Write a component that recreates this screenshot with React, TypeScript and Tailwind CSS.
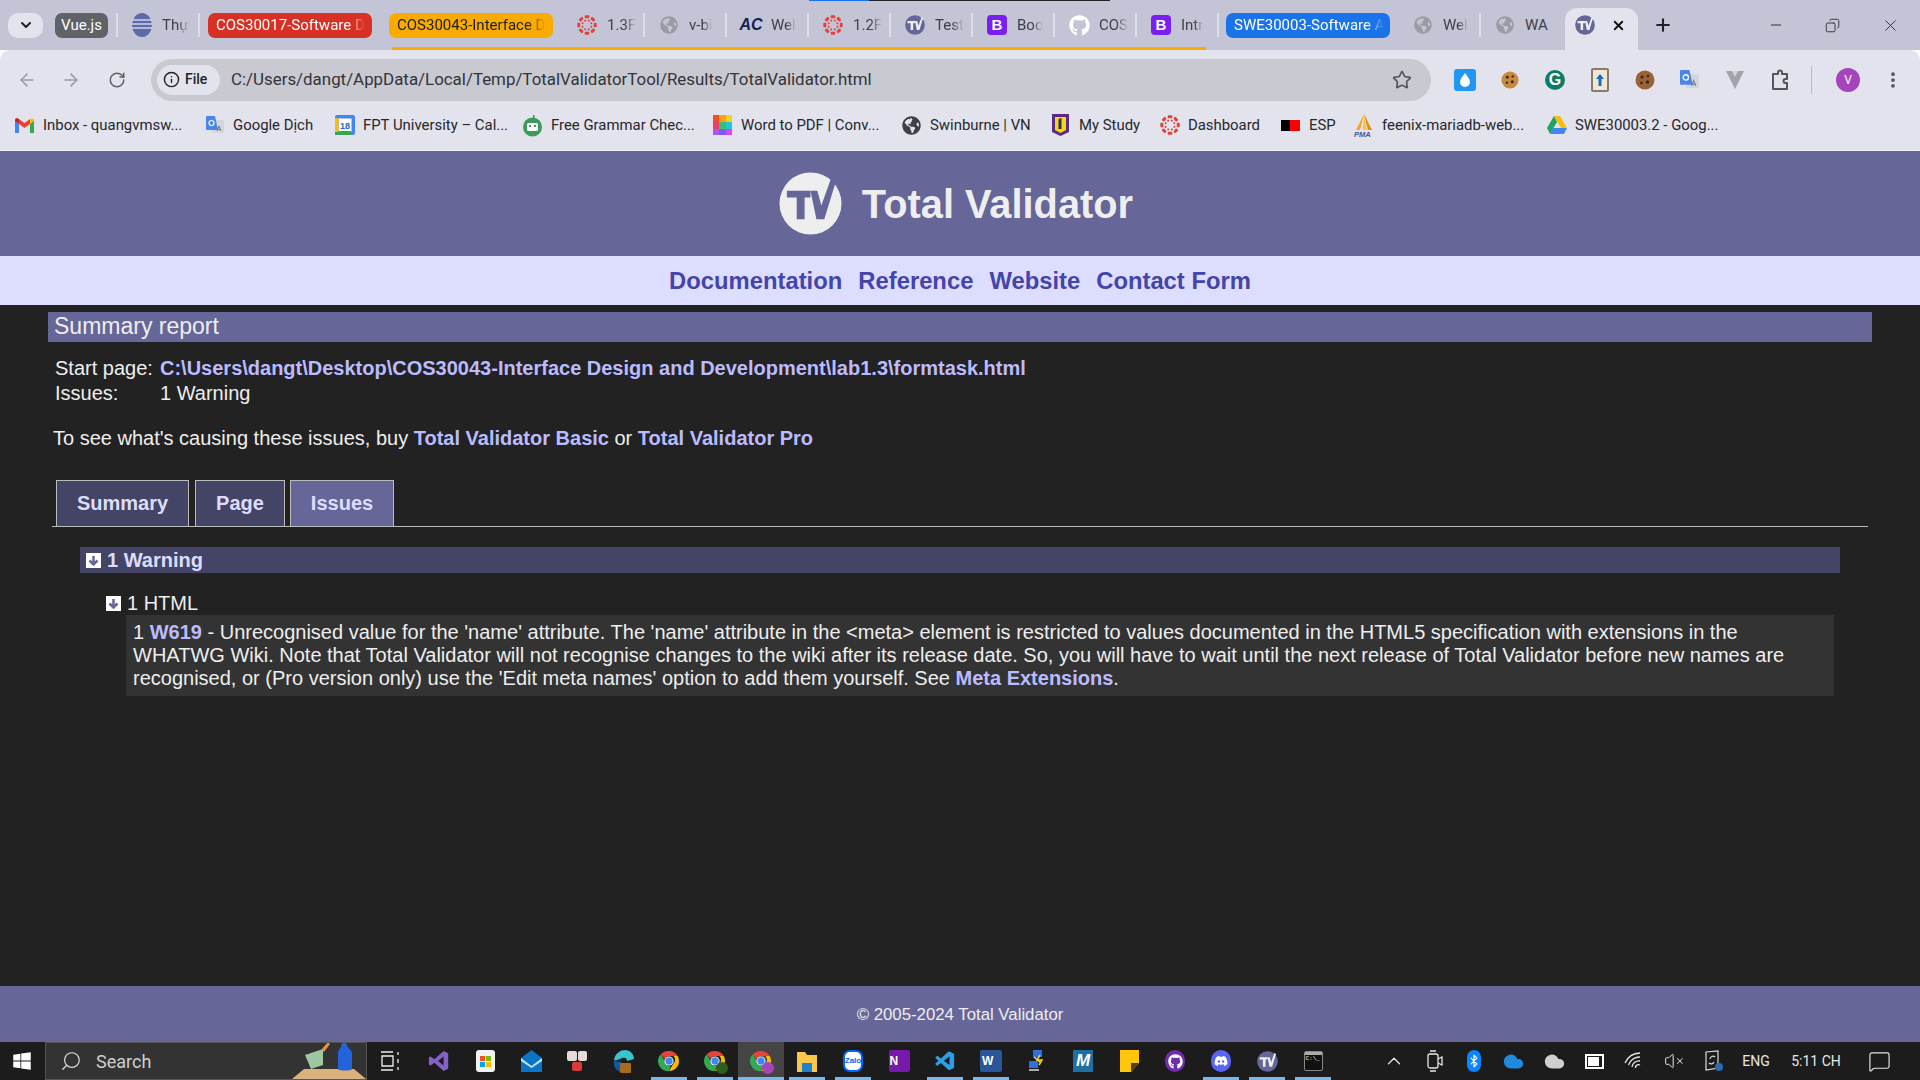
import type { ReactNode } from "react";
import {
  ArrowLeft,
  ArrowRight,
  ChevronDown,
  ChevronUp,
  Info,
  MoreVertical,
  Plus,
  RotateCw,
  Search,
  Star,
  Minus,
  X,
  Bluetooth,
  VolumeX,
  MessageSquare,
  Cloud,
  Copy,
} from "lucide-react";
import { FaDiscord, FaGithub, FaGlobeAmericas, FaWindows } from "react-icons/fa";
import { VscVscode } from "react-icons/vsc";

const UI_FONT = "font-['Roboto',sans-serif]";

function TvLogo({ size, bg = "#eeeeee", fg = "#666699" }: { size: number; bg?: string; fg?: string }) {
  return (
    <svg width={size} height={size} viewBox="0 0 64 64" className="shrink-0">
      <circle cx="32" cy="32" r="31.5" fill={bg} />
      <path d="M8 19h24v7h-6v22h-8V26H8z" fill={fg} />
      <path d="M32 19h7l4 15 10-28 5 3-12 39h-8z" fill={fg} />
    </svg>
  );
}

function CanvasIcon() {
  const dots = [0, 45, 90, 135, 180, 225, 270, 315];
  return (
    <svg width="20" height="20" viewBox="0 0 20 20" className="shrink-0">
      {dots.map((d) => (
        <g key={d} transform={`rotate(${d} 10 10)`}>
          <rect x="7.700" y="0.300" width="4.600" height="3" rx="1" fill="#e4413b" />
          <circle cx="10" cy="5.300" r="1" fill="#e4413b" transform="rotate(22.500 10 10)" />
        </g>
      ))}
    </svg>
  );
}

function BootstrapIcon() {
  return (
    <span className="flex h-[20px] w-[20px] shrink-0 items-center justify-center rounded-[4px] bg-[#7a1ff0] font-['Liberation_Sans',sans-serif] text-[15px] font-bold text-white">
      B
    </span>
  );
}

function ChromeIcon({ size = 22, badge }: { size?: number; badge?: string }) {
  return (
    <span className="relative shrink-0" style={{ width: size, height: size }}>
      <svg width={size} height={size} viewBox="0 0 24 24">
        <path d="M12 1a11 11 0 0 1 9.500 5.500H12a5.500 5.500 0 0 0-5 3L3 4.600A11 11 0 0 1 12 1z" fill="#ea4335" />
        <path d="M21.500 6.500A11 11 0 0 1 12 23l4.800-8.200a5.500 5.500 0 0 0 0-8.300z" fill="#fbbc05" />
        <path d="M12 23A11 11 0 0 1 3 4.600l4.800 8.300a5.500 5.500 0 0 0 6 4.500z" fill="#34a853" />
        <circle cx="12" cy="12" r="5" fill="#fff" />
        <circle cx="12" cy="12" r="4" fill="#4285f4" />
      </svg>
      {badge && (
        <span
          className="absolute right-[-2px] bottom-[-2px] h-[12px] w-[12px] rounded-full"
          style={{ backgroundColor: badge }}
        />
      )}
    </span>
  );
}

function DriveIcon() {
  return (
    <svg width="20" height="18" viewBox="0 0 20 18" className="shrink-0">
      <path d="M7 0h6l7 12h-6z" fill="#fbbc04" />
      <path d="M7 0l3 6-7 12-3-6z" fill="#1fa463" />
      <path d="M6 12h14l-3 6H3z" fill="#4285f4" />
    </svg>
  );
}

function GmailIcon() {
  return (
    <svg width="19" height="15" viewBox="0 0 19 15" className="shrink-0">
      <path d="M0 2v13h4V6z" fill="#4285f4" />
      <path d="M15 6v9h4V2z" fill="#34a853" />
      <path d="M15 2v4l4-3V2a2 2 0 0 0-3-1z" fill="#fbbc04" />
      <path d="M4 6V1l5.500 4L15 1v5l-5.500 4z" fill="#ea4335" />
      <path d="M0 2v1l4 3V1L3 .4A2 2 0 0 0 0 2z" fill="#c5221f" />
    </svg>
  );
}

function TranslateIcon({ size = 18 }: { size?: number }) {
  return (
    <svg width={size} height={size} viewBox="0 0 18 18" className="shrink-0">
      <rect x="6" y="4" width="12" height="13" rx="1" fill="#d5d6dc" />
      <path d="M11 15l2-5 2 5m-3-1.500h2" stroke="#777" fill="none" />
      <path d="M1 0h8l3 14H1a1 1 0 0 1-1-1V1a1 1 0 0 1 1-1z" fill="#4a86e8" />
      <circle cx="5.500" cy="7" r="2.500" fill="none" stroke="#fff" strokeWidth="1.200" />
    </svg>
  );
}

function CalendarIcon() {
  return (
    <svg width="20" height="20" viewBox="0 0 20 20" className="shrink-0">
      <rect width="20" height="20" rx="2" fill="#4285f4" />
      <rect x="3.500" y="3.500" width="13" height="13" fill="#fff" />
      <rect x="0" y="16" width="16" height="4" fill="#34a853" />
      <rect x="0" y="3" width="3.500" height="14" fill="#fbbc04" />
      <text x="10" y="14" fontSize="9" textAnchor="middle" fill="#1967d2" fontFamily="Liberation Sans" fontWeight="700">
        18
      </text>
    </svg>
  );
}

function GrammarIcon() {
  return (
    <svg width="19" height="24" viewBox="0 0 19 24" className="shrink-0">
      <circle cx="9.500" cy="13" r="9.500" fill="#3d9a5b" />
      <rect x="4" y="9" width="11" height="8" rx="1.500" fill="#fff" />
      <rect x="6" y="11" width="2" height="2" fill="#3d9a5b" />
      <rect x="11" y="11" width="2" height="2" fill="#3d9a5b" />
      <rect x="10" y="1" width="1.500" height="6" fill="#3d9a5b" />
    </svg>
  );
}

function PdfGridIcon() {
  const colors = ["#f04e23", "#f9a11b", "#f7d11e", "#ef3b70", "#38c172", "#21c7d9", "#a855f7", "#7a5cf0", "#d946ef"];
  return (
    <span className="grid h-[20px] w-[20px] shrink-0 grid-cols-3 grid-rows-3">
      {colors.map((c) => (
        <span key={c} style={{ backgroundColor: c }} />
      ))}
    </span>
  );
}

function MyStudyIcon() {
  return (
    <svg width="17" height="22" viewBox="0 0 17 22" className="shrink-0">
      <path d="M0 0h17v18l-8.500 4L0 18z" fill="#5b2a86" />
      <path d="M3 3h11v13l-5.500 3L3 16z" fill="#f5d90a" />
      <path d="M6.500 5l3-1v11h-3z" fill="#2f2a6b" />
    </svg>
  );
}

function EspIcon() {
  return (
    <span className="flex h-[11px] w-[19px] shrink-0">
      <span className="w-[9px] bg-black" />
      <span className="w-[10px] bg-[#f00]" />
    </span>
  );
}

function PmaIcon() {
  return (
    <svg width="20" height="24" viewBox="0 0 20 24" className="shrink-0">
      <path d="M10 0L2 16h4z" fill="#f6a623" />
      <path d="M10 0l-1 16h4z" fill="#f9c04a" />
      <path d="M10 0l8 16h-4z" fill="#e98a14" />
      <text x="0" y="23" fontSize="7.500" fontFamily="Liberation Sans" fontWeight="700" fontStyle="italic" fill="#45588f">
        PMA
      </text>
    </svg>
  );
}

function CookieIcon({ size = 20, color = "#c88a3d" }: { size?: number; color?: string }) {
  return (
    <svg width={size} height={size} viewBox="0 0 20 20" className="shrink-0">
      <circle cx="10" cy="10" r="9.500" fill={color} />
      <circle cx="7" cy="7" r="1.600" fill="#3b2413" />
      <circle cx="13" cy="6" r="1.300" fill="#3b2413" />
      <circle cx="12.500" cy="12" r="1.700" fill="#3b2413" />
      <circle cx="6.500" cy="13" r="1.300" fill="#3b2413" />
    </svg>
  );
}

type TabItem = { icon: ReactNode; text: string };
const globe = <FaGlobeAmericas size={18} className="shrink-0 text-[#9a9ba3]" />;

function Tab({ icon, text }: TabItem) {
  return (
    <div className="flex h-[24px] w-[82px] shrink-0 items-center border-r-2 border-[#dcdde6] pl-[13px]">
      <span className="flex w-[22px] shrink-0 justify-center">{icon}</span>
      <span className="ml-[9px] text-[15px] whitespace-nowrap text-[#3f4046] [mask-image:linear-gradient(to_right,black_60%,transparent)]">
        {text}
      </span>
    </div>
  );
}

function Pill({ text, className }: { text: string; className: string }) {
  return (
    <div
      className={`flex h-[25px] w-[164px] shrink-0 items-center rounded-[7px] pl-[8px] text-[15px] whitespace-nowrap ${className}`}
    >
      <span className="[mask-image:linear-gradient(to_right,black_88%,transparent)]">{text}</span>
    </div>
  );
}

function TabStrip() {
  const midTabs: TabItem[] = [
    { icon: <CanvasIcon />, text: "1.3F" },
    { icon: globe, text: "v-bi" },
    {
      icon: <span className="font-['Liberation_Sans',sans-serif] text-[16px] font-bold italic text-[#17224d]">AC</span>,
      text: "Wel",
    },
    { icon: <CanvasIcon />, text: "1.2F" },
    { icon: <TvLogo size={20} bg="#666699" fg="#eeeeee" />, text: "Test" },
    { icon: <BootstrapIcon />, text: "Boo" },
    { icon: <FaGithub size={21} className="text-white" />, text: "COS" },
    { icon: <BootstrapIcon />, text: "Intr" },
  ];
  return (
    <div className="relative flex h-[50px] shrink-0 items-center bg-[#c3c4d6]">
      <div className="absolute top-0 left-[809px] h-[1px] w-[60px] bg-[#1a73e8]" />
      <div className="absolute top-0 left-[869px] h-[1px] w-[241px] bg-[#222222]" />
      <div className="absolute bottom-0 left-[392px] h-[3px] w-[814px] bg-[#f9ab00]" />
      <button className="ml-[8px] flex h-[25px] w-[35px] items-center justify-center rounded-[10px] bg-[#e2e3ed]">
        <ChevronDown size={16} strokeWidth={3} className="text-[#222]" />
      </button>
      <div className="ml-[12px] flex h-[25px] w-[53px] items-center justify-center rounded-[7px] bg-[#5f6368] text-[15px] text-white">
        Vue.js
      </div>
      <div className="ml-[8px] flex h-[24px] w-[84px] shrink-0 items-center border-x-2 border-[#dcdde6] pl-[14px]">
        <svg width="20" height="24" viewBox="0 0 20 24" className="shrink-0">
          <ellipse cx="10" cy="12" rx="10" ry="12" fill="#5c6ba8" />
          <path d="M0 7h20M0 11h20M0 15h20" stroke="#cfd4ea" strokeWidth="1.300" />
        </svg>
        <span className="ml-[10px] text-[15px] whitespace-nowrap text-[#3f4046] [mask-image:linear-gradient(to_right,black_60%,transparent)]">
          Thự
        </span>
      </div>
      <div className="ml-[8px]">
        <Pill text="COS30017-Software D" className="bg-[#d93025] text-white" />
      </div>
      <div className="ml-[17px]">
        <Pill text="COS30043-Interface D" className="bg-[#f9ab00] text-[#202124]" />
      </div>
      <div className="ml-[10px] flex">
        {midTabs.map((t) => (
          <Tab key={t.text} {...t} />
        ))}
      </div>
      <div className="ml-[7px]">
        <Pill text="SWE30003-Software A" className="bg-[#1a73e8] text-white" />
      </div>
      <div className="ml-[9px] flex">
        <Tab icon={globe} text="Wel" />
        <div className="flex h-[24px] w-[82px] shrink-0 items-center pl-[13px]">
          <span className="flex w-[22px] shrink-0 justify-center">{globe}</span>
          <span className="ml-[9px] text-[15px] whitespace-nowrap text-[#3f4046]">WA</span>
        </div>
      </div>
      <div className="mt-[8px] ml-[2px] flex h-[42px] w-[73px] shrink-0 items-start justify-between rounded-t-[12px] bg-[#e2e3ed] pt-[7px] pr-[12px] pl-[10px]">
        <TvLogo size={20} bg="#666699" fg="#eeeeee" />
        <X size={15} strokeWidth={3} className="mt-[3px] text-[#111]" />
      </div>
      <Plus size={20} strokeWidth={2.5} className="ml-[15px] text-[#222]" />
      <div className="ml-auto flex items-center gap-[41px] pr-[20px] text-[#333]">
        <Minus size={16} strokeWidth={1.5} />
        <Copy size={15} strokeWidth={1.5} className="-scale-x-100" />
        <X size={19} strokeWidth={1.2} />
      </div>
    </div>
  );
}

function Toolbar() {
  return (
    <div className="flex h-[51px] shrink-0 items-center rounded-t-[10px] bg-[#e2e3ed] pt-[8px]">
      <ArrowLeft size={20} className="ml-[17px] text-[#9c9da5]" />
      <ArrowRight size={20} className="ml-[24px] text-[#9c9da5]" />
      <RotateCw size={18} className="ml-[27px] text-[#5f6066]" />
      <div className="ml-[25px] flex h-[42px] w-[1280px] shrink-0 items-center rounded-full bg-[#c8c9d1] pr-[19px] pl-[6px]">
        <div className="flex h-[30px] w-[63px] items-center rounded-full bg-[#e2e3ed] pl-[6px] text-[14px] font-medium text-[#222]">
          <Info size={17} strokeWidth={2} />
          <span className="ml-[5px]">File</span>
        </div>
        <span className="mt-[1px] ml-[11px] text-[16.9px] text-[#33343a]">
          C:/Users/dangt/AppData/Local/Temp/TotalValidatorTool/Results/TotalValidator.html
        </span>
        <Star size={20} strokeWidth={2} className="ml-auto text-[#55565c]" />
      </div>
      <div className="ml-[23px] flex h-[22px] w-[22px] items-center justify-center rounded-[3px] bg-[#2196f3]">
        <svg width="10" height="14" viewBox="0 0 10 14">
          <path d="M5 0c2 3 5 6 5 9a5 5 0 0 1-10 0c0-3 3-6 5-9z" fill="#fff" />
        </svg>
      </div>
      <span className="ml-[25px]">
        <CookieIcon size={18} />
      </span>
      <span className="ml-[26px] flex h-[20px] w-[20px] items-center justify-center rounded-full bg-[#0d7c66] font-['Liberation_Sans',sans-serif] text-[16px] font-bold text-white">
        G
      </span>
      <span className="ml-[26px] flex h-[24px] w-[18px] items-center justify-center rounded-[2px] border-2 border-[#8a7a6a] bg-[#efe7d8]">
        <svg width="10" height="14" viewBox="0 0 10 14">
          <path d="M5 1L1 6h2.500v7h3V6H9z" fill="#1c6db4" />
        </svg>
      </span>
      <span className="ml-[26px]">
        <CookieIcon size={20} color="#9b6238" />
      </span>
      <span className="ml-[25px]">
        <TranslateIcon size={19} />
      </span>
      <svg width="20" height="20" viewBox="0 0 20 20" className="ml-[26px] shrink-0">
        <path d="M1 1h18L10 19z" fill="#a3a4ab" />
        <path d="M7 1h6l-3 6z" fill="#d5d6dc" />
      </svg>
      <svg width="20" height="22" viewBox="0 0 20 22" fill="none" stroke="#55565c" strokeWidth="2" className="ml-[25px] shrink-0">
        <path d="M3 5h5V3.500a2 2 0 0 1 4 0V5h5v5h-1.500a2 2 0 0 0 0 4H17v6H3z" strokeLinejoin="round" />
      </svg>
      <div className="ml-[21px] h-[28px] w-[1px] bg-[#b8b9c2]" />
      <span className="ml-[24px] flex h-[24px] w-[24px] items-center justify-center rounded-full bg-[#a644bb] text-[12px] text-white">
        V
      </span>
      <MoreVertical size={20} strokeWidth={2.5} className="ml-[23px] text-[#55565c]" />
    </div>
  );
}

const bookmarks: { icon: ReactNode; label: string; box: string }[] = [
  { icon: <GmailIcon />, label: "Inbox - quangvmsw...", box: "w-[190px]" },
  { icon: <TranslateIcon />, label: "Google Dịch", box: "w-[130px]" },
  { icon: <CalendarIcon />, label: "FPT University – Cal...", box: "w-[188px]" },
  { icon: <GrammarIcon />, label: "Free Grammar Chec...", box: "w-[190px]" },
  { icon: <PdfGridIcon />, label: "Word to PDF | Conv...", box: "w-[189px]" },
  { icon: <FaGlobeAmericas size={19} className="shrink-0 text-[#3f4046]" />, label: "Swinburne | VN", box: "w-[149px]" },
  { icon: <MyStudyIcon />, label: "My Study", box: "w-[109px]" },
  { icon: <CanvasIcon />, label: "Dashboard", box: "w-[121px]" },
  { icon: <EspIcon />, label: "ESP", box: "w-[73px]" },
  { icon: <PmaIcon />, label: "feenix-mariadb-web...", box: "w-[193px]" },
  { icon: <DriveIcon />, label: "SWE30003.2 - Goog...", box: "w-[180px]" },
];

function BookmarkBar() {
  return (
    <div className="flex h-[50px] shrink-0 items-center border-b border-[#f2f2f6] bg-[#e2e3ed] pl-[15px]">
      {bookmarks.map((b) => (
        <div key={b.label} className={`flex shrink-0 items-center gap-[9px] ${b.box}`}>
          <span className="flex w-[19px] justify-center">{b.icon}</span>
          <span className="text-[14.9px] whitespace-nowrap text-[#26272c]">{b.label}</span>
        </div>
      ))}
    </div>
  );
}

function DownBox() {
  return (
    <span className="flex h-[15px] w-[15px] shrink-0 items-center justify-center bg-white">
      <svg width="11" height="11" viewBox="0 0 11 11">
        <path d="M5.500 1v8M1.500 5.500l4 4 4-4" fill="none" stroke="#666699" strokeWidth="2.500" />
      </svg>
    </span>
  );
}

function ReportTab({ label, active, className }: { label: string; active?: boolean; className: string }) {
  return (
    <div
      className={`flex h-[46px] items-center justify-center border border-b-0 border-[#bbbbbb] text-[20px] font-bold text-[#ddddff] ${
        active ? "bg-[#666699]" : "bg-[#444466]"
      } ${className}`}
    >
      {label}
    </div>
  );
}

function Report() {
  return (
    <main className="min-h-0 flex-1 bg-[#222222] px-[48px] pt-[7px] text-[20px] leading-[25px] text-[#eeeeee]">
      <h2 className="flex h-[30px] items-center bg-[#666699] pb-[2px] pl-[6px] text-[23px]">Summary report</h2>
      <div className="mt-[14px] ml-[7px]">
        <div className="flex">
          <span className="w-[105px]">Start page:</span>
          <a className="font-bold text-[#bbbbff]">
            C:\Users\dangt\Desktop\COS30043-Interface Design and Development\lab1.3\formtask.html
          </a>
        </div>
        <div className="flex">
          <span className="w-[105px]">Issues:</span>
          <span>1 Warning</span>
        </div>
      </div>
      <p className="mt-[20px] ml-[5px]">
        To see what's causing these issues, buy <a className="font-bold text-[#bbbbff]">Total Validator Basic</a> or{" "}
        <a className="font-bold text-[#bbbbff]">Total Validator Pro</a>
      </p>
      <div className="mx-[4px] mt-[29px] flex border-b border-[#bbbbbb] pl-[4px]">
        <ReportTab label="Summary" className="w-[133px]" />
        <ReportTab label="Page" className="ml-[6px] w-[90px]" />
        <ReportTab label="Issues" active className="ml-[5px] w-[104px]" />
      </div>
      <div className="mx-[32px] mt-[20px] flex h-[26px] items-center gap-[6px] bg-[#444466] pl-[6px] font-bold text-[#ddddff]">
        <DownBox />
        <span>1 Warning</span>
      </div>
      <div className="mt-[18px] ml-[58px] flex h-[24px] items-center gap-[6px]">
        <DownBox />
        <span>1 HTML</span>
      </div>
      <div className="mr-[38px] ml-[78px] bg-[#333333] px-[7px] pt-[6px] pb-[6px] leading-[23px]">
        1 <a className="font-bold text-[#bbbbff]">W619</a> - Unrecognised value for the 'name' attribute. The 'name'
        attribute in the &lt;meta&gt; element is restricted to values documented in the HTML5 specification with
        extensions in the WHATWG Wiki. Note that Total Validator will not recognise changes to the wiki after its
        release date. So, you will have to wait until the next release of Total Validator before new names are
        recognised, or (Pro version only) use the 'Edit meta names' option to add them yourself. See{" "}
        <a className="font-bold text-[#bbbbff]">Meta Extensions</a>.
      </div>
    </main>
  );
}

const VS_PATH = "M17 1l5 2.500v17L17 23 7 14l-4 3-2-1V8l2-1 4 3zM17 7l-6 5 6 5z";

function TaskIcon({ children, on, active, className }: { children: ReactNode; on?: boolean; active?: boolean; className?: string }) {
  return (
    <div
      className={`relative flex h-[38px] w-[46px] shrink-0 items-center justify-center ${active ? "bg-[#454545]" : ""} ${className ?? ""}`}
    >
      {children}
      {on && (
        <span className={`absolute bottom-0 h-[3px] bg-[#76b9ed] ${active ? "left-0 w-full" : "left-[5px] w-[36px]"}`} />
      )}
    </div>
  );
}

function Taskbar() {
  return (
    <footer className="flex h-[38px] shrink-0 items-center bg-[#1c1c1c] text-[#e8e8e8]">
      <FaWindows size={20} className="ml-[12px] shrink-0 text-white" />
      <div className="relative ml-[13px] flex h-[38px] w-[322px] shrink-0 items-center overflow-hidden border border-[#555] bg-[#333333] pl-[14px]">
        <Search size={22} strokeWidth={1.3} className="-scale-x-100 text-[#ddd]" />
        <span className={`ml-[14px] text-[18px] text-[#cfcfcf] ${UI_FONT}`}>Search</span>
        <svg width="74" height="38" viewBox="0 0 74 38" className="absolute right-0 bottom-0">
          <path d="M0 38l12-10h50l12 10z" fill="#d9b27c" />
          <path d="M13 14l18-6v16l-12 4z" fill="#9fc79f" />
          <path d="M30 8l6-7 2 2-6 8z" fill="#e8963c" />
          <path d="M46 12c0-3 3-4 4-10h4c2 6 6 7 6 10v16c0 2-14 2-14 0z" fill="#2463d9" />
        </svg>
      </div>
      <TaskIcon>
        <svg width="20" height="20" viewBox="0 0 20 20" fill="none" stroke="#eee" strokeWidth="1.300">
          <path d="M1 1h12M1 19h12M2 5h11v10H2zM18 1v3M18 8v4M18 16v3" />
        </svg>
      </TaskIcon>
      <TaskIcon className="ml-[3px]">
        <svg width="22" height="24" viewBox="0 0 24 24">
          <path d={VS_PATH} fill="#8661c5" fillRule="evenodd" />
        </svg>
      </TaskIcon>
      <TaskIcon>
        <span className="relative flex h-[22px] w-[19px] items-center justify-center rounded-[3px] bg-[#f3f3f3]">
          <span className="grid h-[11px] w-[11px] grid-cols-2 gap-[1px]">
            <span className="bg-[#f25022]" />
            <span className="bg-[#7fba00]" />
            <span className="bg-[#00a4ef]" />
            <span className="bg-[#ffb900]" />
          </span>
        </span>
      </TaskIcon>
      <TaskIcon>
        <svg width="21" height="22" viewBox="0 0 21 22">
          <path d="M0 8L10.500 0 21 8v14H0z" fill="#0a74c7" />
          <path d="M0 8l10.500 8L21 8v3l-10.500 7L0 11z" fill="#bfe3fa" />
        </svg>
      </TaskIcon>
      <TaskIcon>
        <span className="grid h-[20px] w-[20px] grid-cols-2 gap-[1px] bg-transparent">
          <span className="rounded-[2px] bg-[#e5d9d9]" />
          <span className="rounded-[2px] bg-[#e5d9d9]" />
          <span className="col-span-2 mx-[5px] rounded-[2px] bg-[#d83b3b]" />
        </span>
      </TaskIcon>
      <TaskIcon>
        <svg width="21" height="23" viewBox="0 0 21 23">
          <path d="M1 10C2 3 8 0 12 0c5 0 9 4 9 9l-7 2c0-3-2-4-5-3-3 1-5 3-8 2z" fill="#37c6d0" />
          <path d="M1 10c-1 6 2 11 7 12V12c-3 0-5-1-7-2z" fill="#0c59a4" />
          <rect x="7" y="13" width="11" height="10" rx="1" fill="#a86a1f" />
        </svg>
      </TaskIcon>
      <TaskIcon on>
        <ChromeIcon />
      </TaskIcon>
      <TaskIcon on>
        <ChromeIcon badge="#2e5f1e" />
      </TaskIcon>
      <TaskIcon on active>
        <ChromeIcon badge="#a644bb" />
      </TaskIcon>
      <TaskIcon on>
        <svg width="20" height="22" viewBox="0 0 20 22">
          <path d="M0 2h8l2 3h10v17H0z" fill="#f9c84a" />
          <rect x="5" y="13" width="10" height="9" fill="#1f7fd1" />
        </svg>
      </TaskIcon>
      <TaskIcon on>
        <span className="flex h-[22px] w-[20px] items-center justify-center rounded-[7px] border-2 border-[#0068ff] bg-white text-[8px] font-bold text-[#0068ff]">
          Zalo
        </span>
      </TaskIcon>
      <TaskIcon>
        <span className="flex h-[22px] w-[21px] items-center rounded-[2px] bg-[#7719aa] pl-[1px] font-['Liberation_Sans',sans-serif] text-[12px] font-bold text-white">
          N
        </span>
      </TaskIcon>
      <TaskIcon on>
        <VscVscode size={23} className="text-[#2d9fe6]" />
      </TaskIcon>
      <TaskIcon on>
        <span className="flex h-[22px] w-[22px] items-center rounded-[2px] bg-[#2b579a] pl-[2px] font-['Liberation_Sans',sans-serif] text-[12px] font-bold text-white">
          W
        </span>
      </TaskIcon>
      <TaskIcon>
        <svg width="18" height="22" viewBox="0 0 18 22">
          <rect x="5" y="0" width="9" height="7" fill="#2f6ee0" />
          <rect x="1" y="11" width="9" height="7" fill="#2f6ee0" />
          <path d="M1 20h10M6 7l6 5" stroke="#ddd" strokeWidth="1.500" />
          <path d="M12 5l-3 5h5l-3 5" stroke="#f5d90a" strokeWidth="1.500" fill="none" />
        </svg>
      </TaskIcon>
      <TaskIcon>
        <span className="flex h-[22px] w-[20px] items-center justify-center bg-[#1e6fa3] font-['Liberation_Sans',sans-serif] text-[17px] font-bold italic text-white">
          M
        </span>
      </TaskIcon>
      <TaskIcon>
        <svg width="19" height="22" viewBox="0 0 19 22">
          <path d="M0 0h19v13l-8 9H0z" fill="#ffc60b" />
          <path d="M11 22v-9h8z" fill="#4d4220" />
        </svg>
      </TaskIcon>
      <TaskIcon>
        <span className="flex h-[22px] w-[20px] items-center justify-center rounded-full bg-[#6f2da8]">
          <FaGithub size={15} className="text-white" />
        </span>
      </TaskIcon>
      <TaskIcon on>
        <span className="flex h-[22px] w-[20px] items-center justify-center rounded-full bg-[#5865f2]">
          <FaDiscord size={14} className="text-white" />
        </span>
      </TaskIcon>
      <TaskIcon on>
        <TvLogo size={21} bg="#666699" fg="#eeeeee" />
      </TaskIcon>
      <TaskIcon on>
        <span className="flex h-[20px] w-[19px] flex-col rounded-[2px] border border-[#888] bg-[#111]">
          <span className="h-[3px] bg-[#aaa]" />
          <span className="pl-[1px] font-mono text-[6px] leading-[8px] text-white">C:\_</span>
        </span>
      </TaskIcon>
      <div className="ml-[37px] flex h-[38px] items-center">
        <span className="flex w-[42px] justify-center">
          <ChevronUp size={22} strokeWidth={1.3} />
        </span>
        <span className="flex w-[39px] justify-center">
          <svg width="16" height="22" viewBox="0 0 16 22" fill="none" stroke="#e8e8e8" strokeWidth="1.300">
            <rect x="1" y="4" width="10" height="14" rx="2" />
            <path d="M11 9l4-2v8l-4-2M3 1h6M3 21h6" />
          </svg>
        </span>
        <span className="flex w-[39px] justify-center">
          <span className="flex h-[22px] w-[14px] items-center justify-center rounded-full bg-[#0a84ff]">
            <Bluetooth size={14} className="text-white" />
          </span>
        </span>
        <span className="flex w-[41px] justify-center">
          <Cloud size={21} fill="#1f8ae0" className="text-[#1f8ae0]" />
        </span>
        <span className="flex w-[40px] justify-center">
          <Cloud size={21} fill="#cfcfcf" className="text-[#cfcfcf]" />
        </span>
        <span className="flex w-[40px] justify-center">
          <span className="flex h-[15px] w-[19px] items-center border-2 border-white pl-[1px]">
            <span className="h-[9px] w-[11px] bg-white" />
          </span>
        </span>
        <span className="flex w-[40px] justify-center">
          <svg width="20" height="20" viewBox="0 0 20 20" fill="none" stroke="#e8e8e8" strokeWidth="1.300">
            <path d="M1 12a17 17 0 0 1 15-10M4.500 14a12 12 0 0 1 11.500-8M8 16a7 7 0 0 1 8-6M11.500 17a3 3 0 0 1 4.500-3" />
          </svg>
        </span>
        <span className="flex w-[39px] justify-center">
          <VolumeX size={20} strokeWidth={1.2} />
        </span>
        <span className="flex w-[42px] justify-center">
          <svg width="20" height="22" viewBox="0 0 20 22" fill="none" stroke="#ddd" strokeWidth="1.200">
            <path d="M2 2l12-1v17L2 20zM6 9a3 3 0 0 1 5-2M10 12a3 3 0 0 1-5 1" />
            <circle cx="15" cy="17" r="4" fill="#2b6cb0" stroke="none" />
          </svg>
        </span>
        <span className={`flex w-[42px] justify-center text-[14px] ${UI_FONT}`}>ENG</span>
        <span className={`flex w-[78px] justify-center text-[14px] ${UI_FONT}`}>5:11 CH</span>
        <span className="flex w-[48px] justify-center">
          <MessageSquare size={23} strokeWidth={1.2} />
        </span>
      </div>
    </footer>
  );
}

export default function App() {
  return (
    <div className="flex h-[1080px] w-[1920px] flex-col overflow-hidden font-['Liberation_Sans',Arial,sans-serif]">
      <div className={UI_FONT}>
        <TabStrip />
        <Toolbar />
        <BookmarkBar />
      </div>
      <header className="flex h-[105px] shrink-0 items-center justify-center gap-[20px] bg-[#666699] pr-[8px]">
        <TvLogo size={63} />
        <h1 className="mt-[2px] text-[39.8px] font-bold text-[#eeeeee]">Total Validator</h1>
      </header>
      <nav className="flex h-[49px] shrink-0 items-center justify-center gap-[16px] bg-[#ddddff] text-[23.8px] font-bold text-[#4444aa]">
        <a>Documentation</a>
        <a>Reference</a>
        <a>Website</a>
        <a>Contact Form</a>
      </nav>
      <Report />
      <div className="flex h-[56px] shrink-0 items-center justify-center bg-[#666699] pt-[1px] text-[16.8px] text-[#eeeeee]">
        © 2005-2024 Total Validator
      </div>
      <Taskbar />
    </div>
  );
}
